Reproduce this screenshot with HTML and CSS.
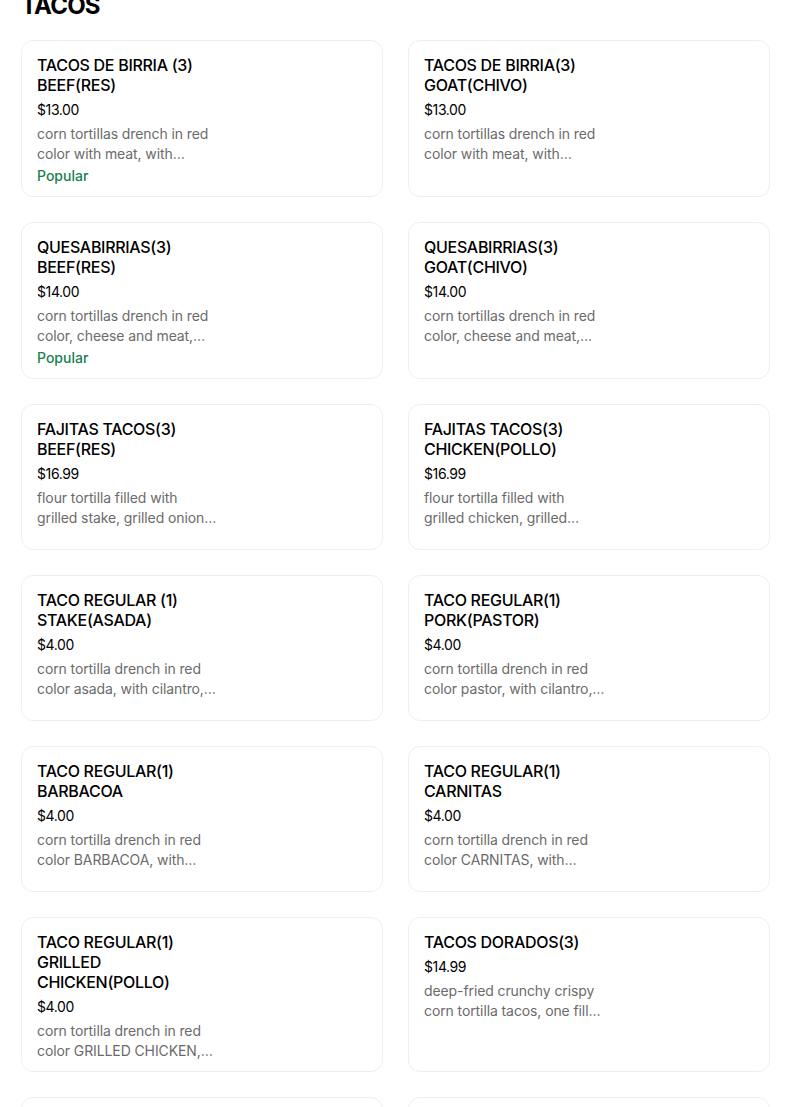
FILE: index.html
```html
<!DOCTYPE html>
<html>
<head>
<meta charset="utf-8">
<link rel="stylesheet" href="styles.css">
</head>
<body>
<section class="menu">
  <h2 class="heading">TACOS</h2>
  <div class="grid">
    <div class="card"><div class="info">
      <div class="title">TACOS DE BIRRIA (3) BEEF(RES)</div>
      <div class="price">$13.00</div>
      <div class="desc">corn tortillas drench in red color with meat, with consome, onion and cilantro</div>
      <div class="tag">Popular</div>
    </div></div>
    <div class="card"><div class="info">
      <div class="title">TACOS DE BIRRIA(3) GOAT(CHIVO)</div>
      <div class="price">$13.00</div>
      <div class="desc">corn tortillas drench in red color with meat, with consome, onion and cilantro</div>
    </div></div>
    <div class="card"><div class="info">
      <div class="title">QUESABIRRIAS(3) BEEF(RES)</div>
      <div class="price">$14.00</div>
      <div class="desc">corn tortillas drench in red color, cheese and meat, with onion, cilantro and consome</div>
      <div class="tag">Popular</div>
    </div></div>
    <div class="card"><div class="info">
      <div class="title">QUESABIRRIAS(3) GOAT(CHIVO)</div>
      <div class="price">$14.00</div>
      <div class="desc">corn tortillas drench in red color, cheese and meat, with onion, cilantro and consome</div>
    </div></div>
    <div class="card"><div class="info">
      <div class="title">FAJITAS TACOS(3) BEEF(RES)</div>
      <div class="price">$16.99</div>
      <div class="desc">flour tortilla filled with grilled stake, grilled onions and peppers</div>
    </div></div>
    <div class="card"><div class="info">
      <div class="title">FAJITAS TACOS(3) CHICKEN(POLLO)</div>
      <div class="price">$16.99</div>
      <div class="desc">flour tortilla filled with grilled chicken, grilled onions and peppers</div>
    </div></div>
    <div class="card"><div class="info">
      <div class="title">TACO REGULAR (1) STAKE(ASADA)</div>
      <div class="price">$4.00</div>
      <div class="desc">corn tortilla drench in red color asada, with cilantro, onion</div>
    </div></div>
    <div class="card"><div class="info">
      <div class="title">TACO REGULAR(1) PORK(PASTOR)</div>
      <div class="price">$4.00</div>
      <div class="desc">corn tortilla drench in red color pastor, with cilantro, onion</div>
    </div></div>
    <div class="card"><div class="info">
      <div class="title">TACO REGULAR(1) BARBACOA</div>
      <div class="price">$4.00</div>
      <div class="desc">corn tortilla drench in red color BARBACOA, with cilantro, onion</div>
    </div></div>
    <div class="card"><div class="info">
      <div class="title">TACO REGULAR(1) CARNITAS</div>
      <div class="price">$4.00</div>
      <div class="desc">corn tortilla drench in red color CARNITAS, with cilantro, onion</div>
    </div></div>
    <div class="card"><div class="info">
      <div class="title">TACO REGULAR(1) GRILLED CHICKEN(POLLO)</div>
      <div class="price">$4.00</div>
      <div class="desc">corn tortilla drench in red color GRILLED CHICKEN, with cilantro, onion</div>
    </div></div>
    <div class="card"><div class="info">
      <div class="title">TACOS DORADOS(3)</div>
      <div class="price">$14.99</div>
      <div class="desc">deep-fried crunchy crispy corn tortilla tacos, one filled with potato</div>
    </div></div>
    <div class="card"><div class="info">
      <div class="title">TACOS DORADOS(3)</div>
      <div class="price">$14.99</div>
      <div class="desc">deep-fried crunchy crispy corn tortilla tacos</div>
    </div></div>
    <div class="card"><div class="info">
      <div class="title">TACOS DORADOS(3)</div>
      <div class="price">$14.99</div>
      <div class="desc">deep-fried crunchy crispy corn tortilla tacos</div>
    </div></div>
  </div>
</section>
</body>
</html>
```

FILE: styles.css
```css
html, body {
  margin: 0;
  padding: 0;
  background: #ffffff;
  overflow: hidden;
}
body {
  font-family: Inter, "Liberation Sans", sans-serif;
  color: #000000;
}
.menu {
  padding: 0 34px 0 21px;
}
.heading {
  margin: -10px 0 18px 0;
  font-size: 24px;
  line-height: 32px;
  font-weight: 700;
  letter-spacing: -0.8px;
}
.grid {
  display: grid;
  grid-template-columns: 362px 362px;
  column-gap: 25px;
  row-gap: 25px;
}
.card {
  box-sizing: border-box;
  min-height: 146px;
  border: 1px solid #efefef;
  border-radius: 12px;
  padding: 14px 15px 10px 15px;
  display: flex;
}
.info {
  width: 184px;
  display: flex;
  flex-direction: column;
}
.title {
  font-size: 16px;
  line-height: 20px;
  font-weight: 500;
  letter-spacing: -0.3px;
}
.price {
  margin-top: 5px;
  font-size: 14px;
  line-height: 20px;
  letter-spacing: -0.4px;
}
.desc {
  margin-top: 4px;
  font-size: 14px;
  line-height: 20px;
  color: #6b6b6b;
  letter-spacing: -0.1px;
  display: -webkit-box;
  -webkit-line-clamp: 2;
  -webkit-box-orient: vertical;
  overflow: hidden;
}
.tag {
  margin-top: 2px;
  font-size: 14px;
  line-height: 20px;
  font-weight: 500;
  color: #1a8050;
}
```
